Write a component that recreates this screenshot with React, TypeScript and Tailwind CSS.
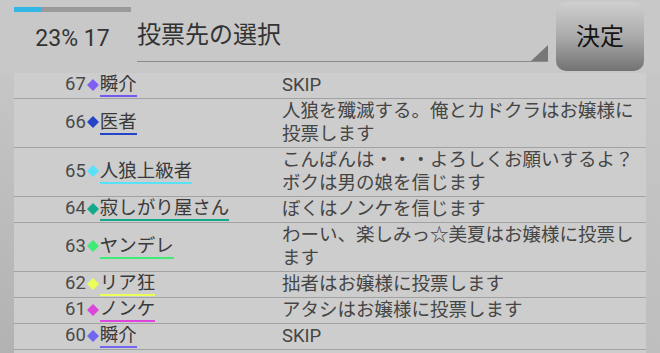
import React from "react";

type Row = { n: number; name: string; text: string; fill: string; border: string };

const rows: Row[] = [
  { n: 67, name: "瞬介", text: "SKIP", fill: "fill-[#7f5ff2]", border: "border-[#7556ee]" },
  { n: 66, name: "医者", text: "人狼を殲滅する。俺とカドクラはお嬢様に投票します", fill: "fill-[#2444c8]", border: "border-[#2444c8]" },
  { n: 65, name: "人狼上級者", text: "こんばんは・・・よろしくお願いするよ？ボクは男の娘を信じます", fill: "fill-[#58e2fa]", border: "border-[#58e2fa]" },
  { n: 64, name: "寂しがり屋さん", text: "ぼくはノンケを信じます", fill: "fill-[#12aa8a]", border: "border-[#12aa8a]" },
  { n: 63, name: "ヤンデレ", text: "わーい、楽しみっ☆美夏はお嬢様に投票します", fill: "fill-[#40ea74]", border: "border-[#40ea74]" },
  { n: 62, name: "リア狂", text: "拙者はお嬢様に投票します", fill: "fill-[#eaff58]", border: "border-[#eaff58]" },
  { n: 61, name: "ノンケ", text: "アタシはお嬢様に投票します", fill: "fill-[#dc46dc]", border: "border-[#dc46dc]" },
  { n: 60, name: "瞬介", text: "SKIP", fill: "fill-[#7266ee]", border: "border-[#7266ee]" },
];

function Diamond({ cls }: { cls: string }) {
  return (
    <svg width="14" height="14" viewBox="0 0 14 14" className="shrink-0 mb-[2px]">
      <polygon points="7,1 13,7 7,13 1,7" className={cls} />
    </svg>
  );
}

export default function App() {
  return (
    <div
      className="w-[660px] h-[353px] overflow-hidden bg-[#c8c8c8] flex flex-col"
      style={{ fontFamily: 'Roboto, "Noto Sans CJK JP", sans-serif' }}
    >
      {/* header */}
      <div className="h-[73px] shrink-0 flex pl-[14px]">
        <div className="w-[117px] flex flex-col">
          <div className="mt-[7px] h-[5px] bg-[#9a9a9a] flex">
            <div className="w-[27px] bg-[#33b5e5]" />
          </div>
          <div className="mt-[12px] text-center text-[23px] leading-[30px] text-[#333]">23% 17</div>
        </div>
        <div className="ml-[6px] w-[411px] h-[62px] relative border-b border-[#8a8a8a]">
          <div className="mt-[20px] text-[24px] leading-[30px] text-[#333]">投票先の選択</div>
          <svg width="17" height="16" viewBox="0 0 17 16" className="absolute right-0 bottom-0">
            <polygon points="17,0 17,16 0,16" className="fill-[#777]" />
          </svg>
        </div>
        <div className="ml-[8px] mt-[2px] w-[88px] h-[69px] rounded-[10px] bg-gradient-to-b from-[#cfcfcf] via-[#ababab] to-[#737373] flex items-center justify-center text-[24px] text-[#141414]">
          決定
        </div>
      </div>
      {/* list area */}
      <div className="flex-1 flex">
        <div className="w-[14px] bg-gradient-to-b from-[#c6c6c6] to-[#b2b2b2]" />
        <div className="flex-1 bg-[#cdcdcd] flex flex-col">
          {rows.map((r, i) => (
            <div key={i} className="grid grid-cols-[268px_1fr] py-px border-b border-[#a2a2a2]">
              <div className="flex items-center pl-[51px] text-[18.5px] leading-[21px]">
                <span className="text-[#4a4a4a] border-b-2 border-transparent">{r.n}</span>
                <Diamond cls={r.fill} />
                <span className={`text-[#3a3a3a] border-b-2 ${r.border}`}>{r.name}</span>
              </div>
              <div className="text-[18.5px] leading-[23px] text-[#454545] pr-[4px]">{r.text}</div>
            </div>
          ))}
        </div>
        <div className="w-[14px] bg-gradient-to-b from-[#c6c6c6] to-[#bebebe]" />
      </div>
    </div>
  );
}
